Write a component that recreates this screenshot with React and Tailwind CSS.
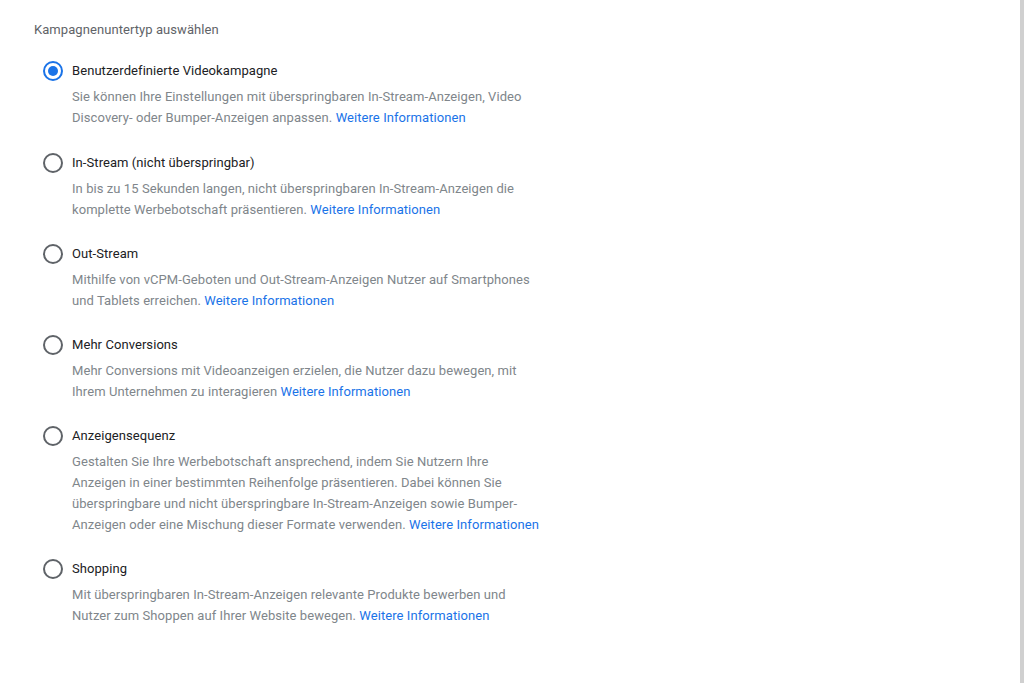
import React, { useState } from "react";

const options = [
  {
    id: "custom",
    label: "Benutzerdefinierte Videokampagne",
    lines: [
      "Sie können Ihre Einstellungen mit überspringbaren In-Stream-Anzeigen, Video",
      "Discovery- oder Bumper-Anzeigen anpassen.",
    ],
  },
  {
    id: "instream",
    label: "In-Stream (nicht überspringbar)",
    lines: [
      "In bis zu 15 Sekunden langen, nicht überspringbaren In-Stream-Anzeigen die",
      "komplette Werbebotschaft präsentieren.",
    ],
  },
  {
    id: "outstream",
    label: "Out-Stream",
    lines: [
      "Mithilfe von vCPM-Geboten und Out-Stream-Anzeigen Nutzer auf Smartphones",
      "und Tablets erreichen.",
    ],
  },
  {
    id: "conversions",
    label: "Mehr Conversions",
    lines: [
      "Mehr Conversions mit Videoanzeigen erzielen, die Nutzer dazu bewegen, mit",
      "Ihrem Unternehmen zu interagieren",
    ],
  },
  {
    id: "sequence",
    label: "Anzeigensequenz",
    lines: [
      "Gestalten Sie Ihre Werbebotschaft ansprechend, indem Sie Nutzern Ihre",
      "Anzeigen in einer bestimmten Reihenfolge präsentieren. Dabei können Sie",
      "überspringbare und nicht überspringbare In-Stream-Anzeigen sowie Bumper-",
      "Anzeigen oder eine Mischung dieser Formate verwenden.",
    ],
  },
  {
    id: "shopping",
    label: "Shopping",
    lines: [
      "Mit überspringbaren In-Stream-Anzeigen relevante Produkte bewerben und",
      "Nutzer zum Shoppen auf Ihrer Website bewegen.",
    ],
  },
];

const Radio = ({ checked }) => (
  <span
    className={`flex items-center justify-center w-5 h-5 rounded-full border-2 ${
      checked ? "border-[#1a73e8]" : "border-[#5f6368]"
    }`}
  >
    {checked && <span className="w-2.5 h-2.5 rounded-full bg-[#1a73e8]" />}
  </span>
);

export default function App() {
  const [selected, setSelected] = useState("custom");

  return (
    <div
      className="w-[1024px] h-[683px] bg-white border-r-4 border-[#d0d0d0] overflow-hidden tracking-[0.07px]"
      style={{ fontFamily: "Roboto, 'Liberation Sans', sans-serif" }}
    >
      <div className="pl-[34px] pt-[20px]">
        {/* Heading */}
        <div className="text-[13px] leading-5 text-[#5f6368]">Kampagnenuntertyp auswählen</div>

        {/* Options */}
        <div className="mt-[21px] pl-[9px] flex flex-col">
          {options.map((opt, idx) => (
            <div
              key={opt.id}
              className={`flex gap-[9px] ${idx === 0 ? "pb-[25px]" : "pb-[24px]"}`}
              onClick={() => setSelected(opt.id)}
            >
              <Radio checked={selected === opt.id} />
              <div>
                <div className="text-[13px] leading-5 text-[#202124]">{opt.label}</div>
                <div className="mt-[5px] text-[13px] leading-[21px] text-[#80868b]">
                  {opt.lines.map((line, i) => (
                    <div key={i}>
                      {line}
                      {i === opt.lines.length - 1 && (
                        <>
                          {" "}
                          <a href="#" className="text-[#1a73e8]">
                            Weitere Informationen
                          </a>
                        </>
                      )}
                    </div>
                  ))}
                </div>
              </div>
            </div>
          ))}
        </div>
      </div>
    </div>
  );
}
